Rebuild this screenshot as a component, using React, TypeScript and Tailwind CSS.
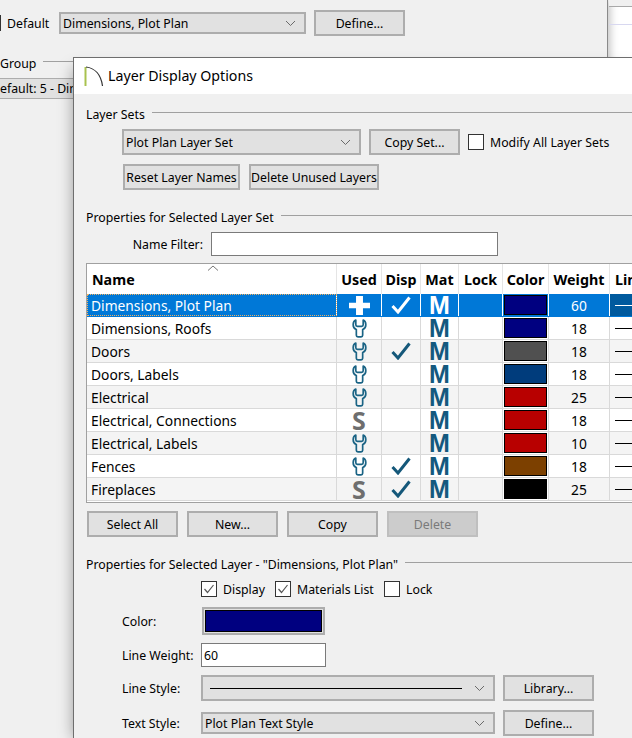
import React from "react";

const FONT = "font-['Noto_Sans','Open_Sans',sans-serif]";

function Chevron() {
  return (
    <svg width="11" height="7" viewBox="0 0 11 7" className="shrink-0">
      <path d="M1 1 L5.5 5.5 L10 1" fill="none" stroke="#6a6a6a" strokeWidth="1" />
    </svg>
  );
}

function Btn({ w, h = "h-[26px]", children, disabled }: { w: string; h?: string; children: React.ReactNode; disabled?: boolean }) {
  return (
    <div
      className={`${w} ${h} shrink-0 flex items-center justify-center border-2 pt-[2px] whitespace-nowrap text-[12.3px] ${
        disabled ? "bg-[#cccccc] border-[#bfbfbf] text-[#7a7a7a]" : "bg-[#e1e1e1] border-[#adadad] text-black"
      }`}
    >
      {children}
    </div>
  );
}

function Combo({ w, h = "h-[26px]", children }: { w: string; h?: string; children: React.ReactNode }) {
  return (
    <div className={`${w} ${h} shrink-0 flex items-center justify-between bg-[#e1e1e1] border-2 border-[#adadad] pl-[2px] pr-[8px] text-[12.3px] text-black whitespace-nowrap`}>
      {children}
      <Chevron />
    </div>
  );
}

function Heading({ children }: { children: React.ReactNode }) {
  return (
    <div className="flex items-center gap-[7px] text-[12.3px] text-black h-[18px]">
      <span className="whitespace-nowrap pt-[2px]">{children}</span>
      <div className="flex-1 h-[1px] mb-[3px] bg-[#a0a0a0]" />
    </div>
  );
}

function Check({ checked, label }: { checked?: boolean; label: string }) {
  return (
    <div className="flex items-center gap-[6px] text-[12.3px] text-black">
      <div className="w-[16px] h-[16px] bg-white border border-[#333] flex items-center justify-center">
        {checked && (
          <svg width="12" height="10" viewBox="0 0 12 10">
            <path d="M1.5 5 L4.5 8.5 L10.5 1" fill="none" stroke="#555" strokeWidth="1.2" />
          </svg>
        )}
      </div>
      <span className="pt-[2px]">{label}</span>
    </div>
  );
}

function Wrench() {
  return (
    <svg width="15" height="19" viewBox="0 0 14 18">
      <path
        d="M3.5 1 V5.5 Q3.5 7 5 7 H9 Q10.5 7 10.5 5.5 V1 Q13 2 13 5.5 Q13 9 10 10 V15.5 Q10 17 8.5 17 H5.5 Q4 17 4 15.5 V10 Q1 9 1 5.5 Q1 2 3.5 1 Z"
        fill="none"
        stroke="#1b6485"
        strokeWidth="1.6"
        strokeLinejoin="round"
      />
    </svg>
  );
}

function Tick({ white }: { white?: boolean }) {
  return (
    <svg width="20" height="18" viewBox="0 0 20 18">
      <path d="M1.5 10 L7 16 L18.5 1.5" fill="none" stroke={white ? "#fff" : "#15587a"} strokeWidth="3" />
    </svg>
  );
}

function Plus() {
  return (
    <svg width="21" height="19" viewBox="0 0 20 20" preserveAspectRatio="none">
      <path d="M6.7 0 H13.3 V7 H20 V13 H13.3 V20 H6.7 V13 H0 V7 H6.7 Z" fill="#fff" />
    </svg>
  );
}

const rows = [
  { name: "Dimensions, Plot Plan", used: "plus", disp: true, color: "bg-[#000080]", weight: "60" },
  { name: "Dimensions, Roofs", used: "w", disp: false, color: "bg-[#000080]", weight: "18" },
  { name: "Doors", used: "w", disp: true, color: "bg-[#505050]", weight: "18" },
  { name: "Doors, Labels", used: "w", disp: false, color: "bg-[#003c7c]", weight: "18" },
  { name: "Electrical", used: "w", disp: false, color: "bg-[#b80000]", weight: "25" },
  { name: "Electrical, Connections", used: "s", disp: false, color: "bg-[#b80000]", weight: "18" },
  { name: "Electrical, Labels", used: "w", disp: false, color: "bg-[#b80000]", weight: "10" },
  { name: "Fences", used: "w", disp: true, color: "bg-[#7c4000]", weight: "18" },
  { name: "Fireplaces", used: "s", disp: true, color: "bg-black", weight: "25" },
];

function Cell({ w, children, sel }: { w: string; children?: React.ReactNode; sel: boolean }) {
  return (
    <div className={`${w} h-full shrink-0 flex items-center justify-center border-r ${sel ? "border-white" : "border-[#d9d9d9]"}`}>
      {children}
    </div>
  );
}

function HeadCell({ w, children }: { w: string; children: React.ReactNode }) {
  return (
    <div className={`${w} h-full shrink-0 flex items-center justify-center pt-[2px] border-r border-[#e5e5e5] text-[14.3px] font-bold text-black`}>
      {children}
    </div>
  );
}

export default function App() {
  return (
    <div className={`relative w-[632px] h-[738px] overflow-hidden bg-white ${FONT}`}>
      {/* window behind */}
      <div className="absolute left-0 top-0 w-[608px] h-[738px] bg-[#f0f0f0] border-r border-[#8a8a8a] shadow-[2px_0_8px_rgba(0,0,0,0.25)] overflow-hidden">
        <div className="flex items-center mt-[10px] h-[26px]">
          <div className="w-[1px] h-[16px] bg-[#333]" />
          <span className="ml-[6px] w-[52px] pt-[2px] text-[12.3px] text-black">Default</span>
          <Combo w="w-[247px]" h="h-[22px]"><span className="pt-[2px]">Dimensions, Plot Plan</span></Combo>
          <div className="w-[8px]" />
          <Btn w="w-[91px]">Define...</Btn>
        </div>
        <div className="flex items-center h-[18px] mt-[18px] text-[12.3px] text-black gap-[7px]">
          <span className="pt-[2px]">Group</span>
          <div className="w-[40px] h-[1px] mb-[3px] bg-[#a0a0a0]" />
        </div>
        <div className="w-[80px] h-[21px] mt-[6px] bg-[#e1e1e1] border-y border-[#adadad] flex items-center text-[12.3px] text-black overflow-hidden whitespace-nowrap">
          <span className="ml-[-9px] pt-[2px]">Default: 5 - Dimensions</span>
        </div>
      </div>
      <div className="absolute left-[609px] top-0 w-[23px] h-[7px] bg-[#f0f0f0] border-b border-[#a8a8a8]" />
      <div className="absolute left-[609px] top-[24px] w-[23px] h-[1px] bg-[#d8d8f0]" />

      {/* dialog */}
      <div className="absolute left-[73px] top-[68px] w-[559px] h-[670px] shadow-[0_0_14px_rgba(0,0,0,0.35)]" />
      <div className="absolute left-[73px] top-[57px] w-[559px] h-[681px] bg-[#f0f0f0] border-l border-t border-[#6e6e6e] flex flex-col overflow-hidden">
        <div className="h-[36px] shrink-0 bg-white flex items-center">
          <svg width="22" height="22" viewBox="0 0 22 22" className="ml-[10px] shrink-0">
            <path d="M1.5 2 V21" stroke="#a9c24f" strokeWidth="2" fill="none" />
            <path d="M2 2 C11 3 17 10 18.5 21" stroke="#333" strokeWidth="1.2" fill="none" />
          </svg>
          <span className="ml-[2px] pb-[1px] text-[14.2px] text-black">Layer Display Options</span>
        </div>

        <div className="flex-1 flex flex-col pl-[12px]">
          <div className="mt-[11px]"><Heading>Layer Sets</Heading></div>

          <div className="flex items-center mt-[6px] ml-[36px]">
            <Combo w="w-[239px]"><span className="pt-[2px]">Plot Plan Layer Set</span></Combo>
            <div className="w-[8px]" />
            <Btn w="w-[91px]">Copy Set...</Btn>
            <div className="ml-[8px]"><Check label="Modify All Layer Sets" /></div>
          </div>

          <div className="flex items-center mt-[9px] ml-[37px] gap-[9px]">
            <Btn w="w-[117px]">Reset Layer Names</Btn>
            <Btn w="w-[130px]">Delete Unused Layers</Btn>
          </div>

          <div className="mt-[18px]"><Heading>Properties for Selected Layer Set</Heading></div>

          <div className="flex items-center mt-[6px]">
            <span className="w-[125px] pr-[8px] pt-[2px] text-right text-[12.3px] text-black">Name Filter:</span>
            <div className="w-[287px] h-[24px] bg-white border border-[#7a7a7a]" />
          </div>

          {/* table */}
          <div className="mt-[7px] h-[240px] bg-white border-l border-t border-b border-[#a0a0a0] flex flex-col overflow-hidden">
            <div className="relative flex h-[30px] shrink-0 items-center">
              <svg width="12" height="6" viewBox="0 0 12 6" className="absolute left-[120px] top-[1px]">
                <path d="M1 5.5 L6 1 L11 5.5" fill="none" stroke="#777" />
              </svg>
              <div className="w-[250px] h-full shrink-0 flex items-center pl-[5px] pt-[2px] border-r border-[#e5e5e5] text-[14.3px] font-bold text-black">Name</div>
              <HeadCell w="w-[45px]">Used</HeadCell>
              <HeadCell w="w-[39px]">Disp</HeadCell>
              <HeadCell w="w-[38px]">Mat</HeadCell>
              <HeadCell w="w-[44px]">Lock</HeadCell>
              <HeadCell w="w-[46px]">Color</HeadCell>
              <HeadCell w="w-[61px]">Weight</HeadCell>
              <div className="h-full flex items-center pl-[5px] pt-[2px] text-[14.3px] font-bold text-black whitespace-nowrap">Line Style</div>
            </div>
            {rows.map((r, i) => {
              const sel = i === 0;
              const bg = sel ? "bg-[#0078d7]" : i % 2 === 1 ? "bg-white" : "bg-[#f4f4f4]";
              return (
                <div key={r.name} className={`flex h-[23px] shrink-0 border-b ${sel ? "border-[#0078d7]" : "border-[#d9d9d9]"} ${bg}`}>
                  <div className={`w-[250px] h-full shrink-0 flex items-center pl-[4px] pt-[2px] text-[13.8px] border-r ${sel ? "text-white border-white outline-1 outline-dotted outline-offset-[-1px] outline-[#f0b060]" : "text-black border-[#d9d9d9]"}`}>
                    {r.name}
                  </div>
                  <Cell w="w-[45px]" sel={sel}>
                    {r.used === "plus" ? <Plus /> : r.used === "w" ? <Wrench /> : <span className="font-['Open_Sans'] text-[25px] h-[22px] leading-[22px] font-bold text-[#6e6e6e]">S</span>}
                  </Cell>
                  <Cell w="w-[39px]" sel={sel}>{r.disp && <Tick white={sel} />}</Cell>
                  <Cell w="w-[38px]" sel={sel}>
                    <span className={`font-['Liberation_Sans'] text-[25px] h-[22px] leading-[22px] font-bold ${sel ? "text-white" : "text-[#14597e]"}`}>M</span>
                  </Cell>
                  <Cell w="w-[44px]" sel={sel} />
                  <Cell w="w-[46px]" sel={sel}>
                    <div className={`w-[45px] h-[22px] border ${sel ? "border-[#0078d7]" : "border-white"}`}>
                      <div className={`w-full h-full border border-black ${r.color}`} />
                    </div>
                  </Cell>
                  <div className={`w-[61px] h-full shrink-0 flex items-center justify-center pt-[2px] text-[13.8px] border-r ${sel ? "text-white border-white" : "text-black border-[#d9d9d9]"}`}>
                    {r.weight}
                  </div>
                  <div className={`flex-1 h-full flex items-center ${sel ? "bg-[#005a9e]" : ""}`}>
                    <div className={`w-[17px] h-[1px] ml-[5px] ${sel ? "bg-white" : "bg-black"}`} />
                  </div>
                </div>
              );
            })}
          </div>

          <div className="flex mt-[8px] ml-[1px] gap-[9px]">
            <Btn w="w-[91px]">Select All</Btn>
            <Btn w="w-[91px]">New...</Btn>
            <Btn w="w-[91px]">Copy</Btn>
            <Btn w="w-[91px]" disabled>Delete</Btn>
          </div>

          <div className="mt-[18px]"><Heading>Properties for Selected Layer - "Dimensions, Plot Plan"</Heading></div>

          <div className="flex items-center mt-[7px] ml-[115px] h-[18px]">
            <div className="w-[74px]"><Check checked label="Display" /></div>
            <div className="w-[109px]"><Check checked label="Materials List" /></div>
            <Check label="Lock" />
          </div>

          <div className="flex items-center mt-[9px] h-[28px]">
            <span className="w-[115px] pl-[36px] pt-[2px] text-[12.3px] text-black shrink-0">Color:</span>
            <div className="w-[123px] h-[28px] ml-[1px] bg-[#e1e1e1] border-2 border-[#adadad] p-[1px]">
              <div className="w-full h-full bg-[#000080] border border-black" />
            </div>
          </div>

          <div className="flex items-center mt-[8px] h-[24px]">
            <span className="w-[115px] pl-[36px] pt-[2px] text-[12.3px] text-black shrink-0">Line Weight:</span>
            <div className="w-[125px] h-[24px] bg-white border border-[#7a7a7a] flex items-center pl-[2px] pt-[2px] text-[12.3px] text-black">60</div>
          </div>

          <div className="flex items-center mt-[8px] h-[26px]">
            <span className="w-[115px] pl-[36px] pt-[2px] text-[12.3px] text-black shrink-0">Line Style:</span>
            <Combo w="w-[294px]">
              <div className="ml-[5px] w-[252px] h-[1px] bg-black" />
            </Combo>
            <div className="w-[8px]" />
            <Btn w="w-[91px]">Library...</Btn>
          </div>

          <div className="flex items-center mt-[9px] h-[26px]">
            <span className="w-[115px] pl-[36px] pt-[2px] text-[12.3px] text-black shrink-0">Text Style:</span>
            <Combo w="w-[294px]" h="h-[22px]">
              <span className="pt-[2px]">Plot Plan Text Style</span>
            </Combo>
            <div className="w-[8px]" />
            <Btn w="w-[91px]">Define...</Btn>
          </div>
        </div>
      </div>
    </div>
  );
}
